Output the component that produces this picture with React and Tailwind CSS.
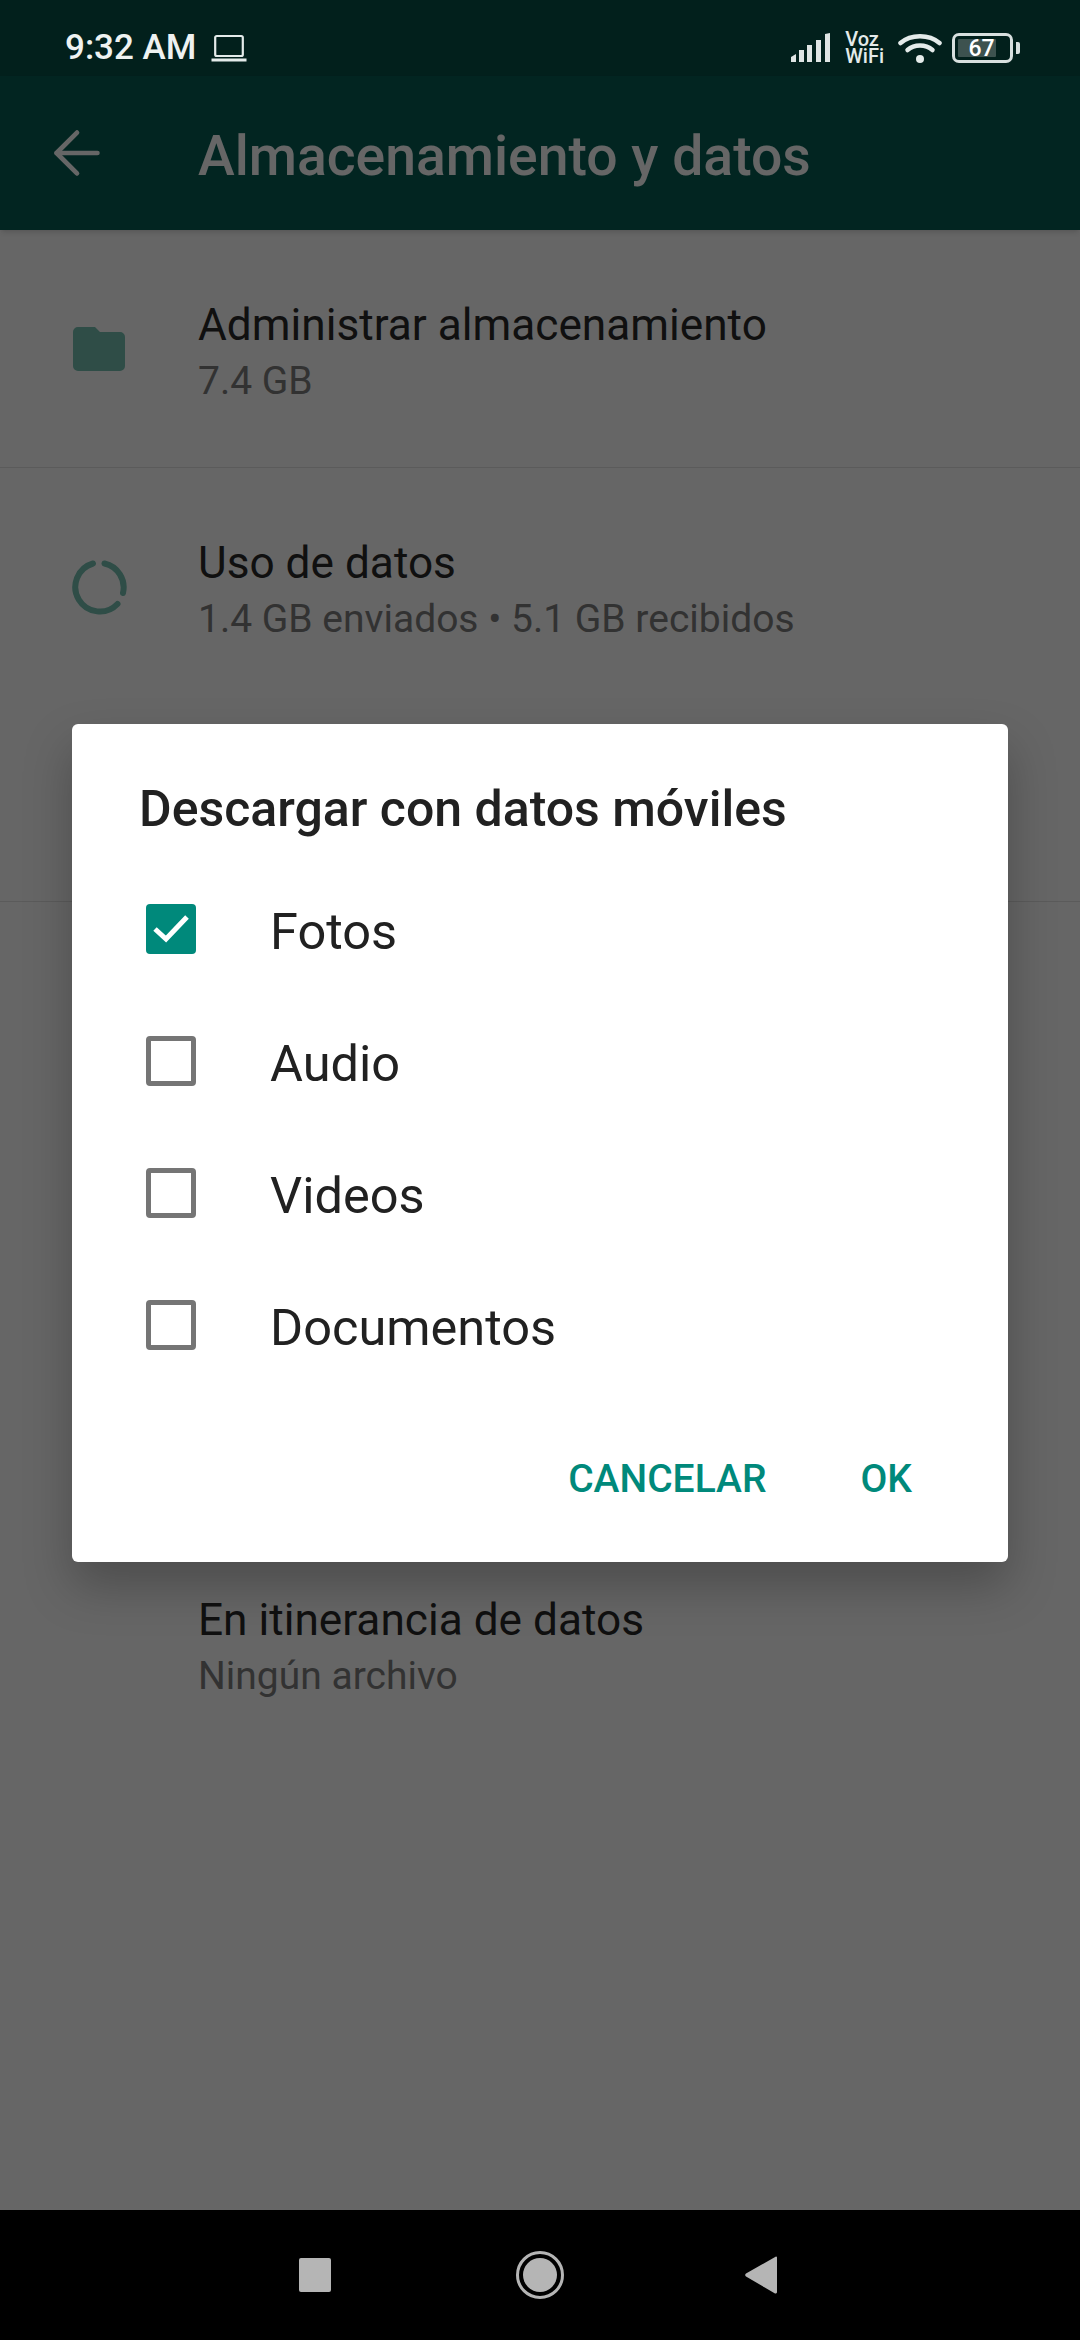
import React from 'react';
import { ArrowLeft } from 'lucide-react';

const options = [
  { label: 'Fotos', checked: true },
  { label: 'Audio', checked: false },
  { label: 'Videos', checked: false },
  { label: 'Documentos', checked: false },
];

const Laptop = () => (
  <svg width="36" height="28" viewBox="0 0 36 28" fill="none" stroke="#e4ebea">
    <rect x="4.2" y="2" width="27.6" height="20" rx="1.5" strokeWidth="2.2" />
    <path d="M0.5 26h35" strokeWidth="3" />
  </svg>
);

const Signal = () => (
  <svg width="40" height="30" viewBox="0 0 40 30" fill="#dfe5e4">
    <path d="M0 24l5-3v8H0z" />
    <rect x="8" y="17" width="5" height="12" />
    <rect x="16" y="12" width="5" height="17" />
    <rect x="25" y="7" width="5" height="22" />
    <path d="M34 1l5-1v29h-5z" />
  </svg>
);

const Wifi = () => (
  <svg width="44" height="32" viewBox="0 0 44 32" fill="none" stroke="#e4ebea" strokeWidth="4.500" strokeLinecap="round">
    <path d="M2.5 11C13 2 31 2 41.5 11" />
    <path d="M9.5 18C16.5 12 27.500 12 34.500 18" />
    <circle cx="22" cy="27" r="4" fill="#e4ebea" stroke="none" />
  </svg>
);

const Battery = () => (
  <div className="flex items-center gap-[3px]">
    <div className="relative flex h-[30px] w-[61px] items-center rounded-[7px] border-[3px] border-[#d8e0df] p-[3px]">
      <div className="h-full w-[38px] rounded-[1px] bg-[#3d524f]" />
      <span className="absolute inset-0 flex items-center justify-center pr-[2px] text-[23px] font-medium leading-none text-white">67</span>
    </div>
    <div className="h-[12px] w-[4px] rounded-r-[2px] bg-[#d8e0df]" />
  </div>
);

const FolderIcon = () => (
  <svg width="52" height="44" viewBox="0 0 52 44" fill="#75c0b1">
    <path d="M5 0h17l5 5h20a5 5 0 0 1 5 5v29a5 5 0 0 1-5 5H5a5 5 0 0 1-5-5V5a5 5 0 0 1 5-5z" />
  </svg>
);

const DataUsageIcon = () => (
  <svg width="56" height="56" viewBox="0 0 56 56" fill="none" stroke="#75c0b1" strokeWidth="6" strokeLinecap="round">
    <path d="M33.500 4.500A24.500 24.500 0 0 1 52 34" />
    <path d="M46.500 45A24.500 24.500 0 1 1 22 4.500" />
  </svg>
);

const SettingRow = ({ icon, title, subtitle, className }) => (
  <div className={`flex items-center ${className}`}>
    <div className="flex w-[198px] shrink-0 justify-center">{icon}</div>
    <div className="pt-[8px]">
      <div className="text-[44.200px] leading-[56px] text-[#2a2a2a]">{title}</div>
      <div className="text-[39px] leading-[56px] text-[#7d7d7d]">{subtitle}</div>
    </div>
  </div>
);

export default function App() {
  return (
    <div className="relative flex h-[2340px] w-[1080px] flex-col overflow-hidden bg-white font-['Roboto',sans-serif]">
      <div className="h-[76px] shrink-0 bg-[#075048]" />
      <div className="flex h-[154px] shrink-0 items-center bg-[#075e54] pl-[42px] shadow-md">
        <ArrowLeft size={70} strokeWidth={1.600} className="text-white" />
        <span className="ml-[86px] pt-[8px] text-[55.300px] font-medium text-white">Almacenamiento y datos</span>
      </div>

      <SettingRow className="h-[238px] border-b border-[#e4e4e4]" icon={<FolderIcon />} title="Administrar almacenamiento" subtitle="7.4 GB" />
      <SettingRow className="h-[238px]" icon={<DataUsageIcon />} title="Uso de datos" subtitle="1.4 GB enviados • 5.1 GB recibidos" />
      <div className="mt-[195px] border-b border-[#e4e4e4]" />
      <SettingRow className="mt-[686px] h-[112px]" title="En itinerancia de datos" subtitle="Ningún archivo" />

      {/* scrim */}
      <div className="absolute inset-0 bg-black/60" />

      {/* status bar */}
      <div className="absolute inset-x-0 top-0 flex h-[76px] items-center justify-between pl-[65px] pr-[60px] pt-[20px]">
        <div className="flex items-center gap-[15px]">
          <span className="text-[35px] font-medium text-[#eef2f1]">9:32 AM</span>
          <Laptop />
        </div>
        <div className="flex items-center gap-[14px]">
          <Signal />
          <div className="text-[20px] font-medium leading-[17px] text-[#e4ebea]">
            Voz<br />WiFi
          </div>
          <Wifi />
          <div className="-ml-[4px]">
            <Battery />
          </div>
        </div>
      </div>

      {/* dialog */}
      <div className="absolute left-[72px] top-[724px] h-[838px] w-[936px] rounded-[6px] bg-white pt-[53px] shadow-[0_24px_48px_rgba(0,0,0,0.25)]">
        <div className="pl-[67px] text-[50px] font-medium leading-[64px] text-[#212121]">Descargar con datos móviles</div>
        <div className="mt-[22px]">
          {options.map((option) => (
            <div key={option.label} className="flex h-[132px] items-center pl-[74px]">
              {option.checked ? (
                <div className="flex h-[50px] w-[50px] items-center justify-center rounded-[4px] bg-[#00897b]">
                  <svg width="38" height="30" viewBox="0 0 38 30" fill="none" stroke="white" strokeWidth="5">
                    <path d="M3 15l11 10L35 3" />
                  </svg>
                </div>
              ) : (
                <div className="h-[50px] w-[50px] rounded-[4px] border-[5px] border-[#757575]" />
              )}
              <span className="ml-[74px] pt-[5px] text-[50.500px] text-[#212121]">{option.label}</span>
            </div>
          ))}
        </div>
        <div className="mt-[59px] flex justify-end gap-[94px] pr-[96px] text-[39px] font-medium text-[#00897b]">
          <span>CANCELAR</span>
          <span>OK</span>
        </div>
      </div>

      {/* nav bar */}
      <div className="absolute inset-x-0 bottom-0 h-[130px] bg-black">
        <div className="flex h-full items-center justify-center pr-[4px]">
          <div className="mr-[185px] h-[34px] w-[32px] rounded-[2px] bg-[#b5b5b5]" />
          <div className="flex h-[48px] w-[48px] items-center justify-center rounded-full border-[3px] border-[#b5b5b5]">
            <div className="h-[34px] w-[34px] rounded-full bg-[#b5b5b5]" />
          </div>
          <svg className="ml-[181px]" width="32" height="38" viewBox="0 0 32 38" fill="#b5b5b5">
            <path d="M31 0.500a1 1 0 0 1 1 1V36a1.500 1.500 0 0 1-2 1.500L1 20.500a2 2 0 0 1 0-3z" />
          </svg>
        </div>
      </div>
    </div>
  );
}
